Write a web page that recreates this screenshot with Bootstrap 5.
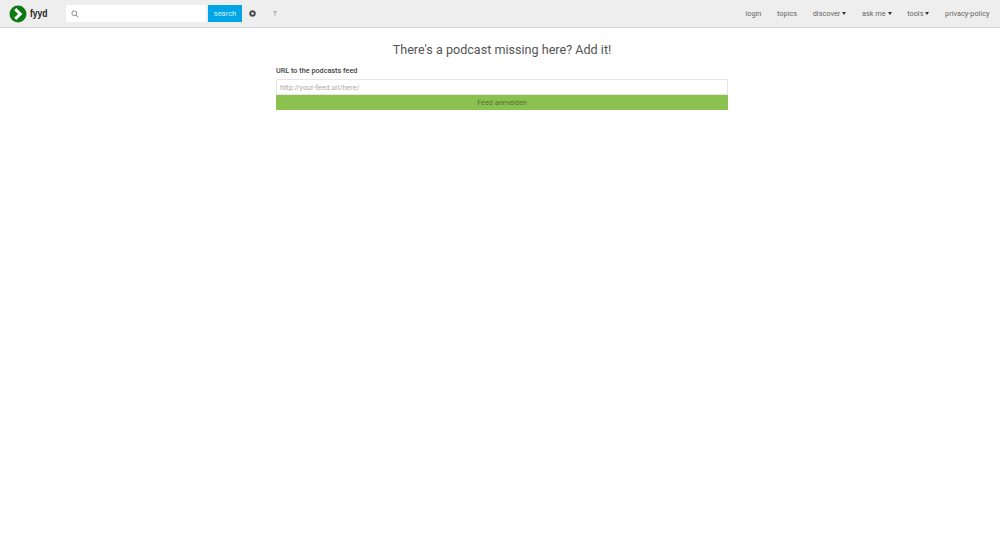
<!DOCTYPE html>
<html lang="en">
<head>
<meta charset="utf-8">
<title>fyyd</title>
<link rel="stylesheet" href="https://cdn.jsdelivr.net/npm/bootstrap@5.3.0/dist/css/bootstrap.min.css">
<style>
body { font-family: Roboto, "Liberation Sans", sans-serif; color: #444; background: #fff; }
.topbar { height: 28px; background: #eee; border-bottom: 1px solid #d5d5d5; padding: 0 10.5px 0 9px; font-size: 7.35px; }
.logo-word { font-family: "Liberation Sans", sans-serif; font-weight: 700; font-size: 11.5px; color: #222; margin-left: 3px; line-height: 1; width: 18px; transform: scaleX(.74); transform-origin: left center; }
.search-box { width: 140px; height: 17px; margin-left: 18px; background: #fff; border-radius: 2px; padding-left: 5px; }
.search-btn { width: 34px; height: 17px; background: #00a5e5; color: #d8f1fb; font-size: 7.5px; line-height: 17px; text-align: center; margin-left: 2px; }
.tool-gear { margin-left: 7px; }
.tool-help { margin-left: 17px; color: #777; }
.top-links { gap: 15.6px; color: #666; }
.caret-down { display: inline-block; width: 0; height: 0; border-left: 2.5px solid transparent; border-right: 2.5px solid transparent; border-top: 3px solid #333; margin-left: 2px; vertical-align: 1px; }
.add-panel { width: 452px; margin: 0 0 0 276px; }
.add-title { font-size: 12.6px; font-weight: 400; line-height: 20px; margin: 12px 0 0; color: #555; text-align: center; }
.feed-label { font-size: 7.25px; font-weight: 500; color: #444; line-height: 12px; margin: 5px 0 0; display: block; }
.feed-input { height: 16px; margin-top: 2px; border: 1px solid #e6e6e6; border-radius: 0; padding: 0 3px; font-size: 7.2px; background: #fff; }
.feed-input::placeholder { color: #aaa; }
.feed-btn { height: 15px; background: #8bc14f; color: #56713a; font-size: 7.3px; line-height: 15px; text-align: center; padding: 0; border: 0; border-radius: 0; display: block; width: 100%; }
</style>
</head>
<body>
<nav class="topbar d-flex align-items-center">
  <svg width="18" height="18" viewBox="0 0 18 18" aria-hidden="true"><circle cx="9" cy="9" r="8.5" fill="#0e7a12"/><path d="M6.2 4.2 11.2 9l-5 4.8" fill="none" stroke="#fff" stroke-width="3"/></svg>
  <span class="logo-word">fyyd</span>
  <div class="search-box d-flex align-items-center">
    <svg width="8" height="8" viewBox="0 0 8 8" aria-hidden="true"><circle cx="3.3" cy="3.3" r="2.4" fill="none" stroke="#888"/><path d="M5 5l2.3 2.3" stroke="#888"/></svg>
  </div>
  <div class="search-btn">search</div>
  <svg class="tool-gear" width="7" height="7" viewBox="0 0 7 7" aria-hidden="true"><circle cx="3.5" cy="3.5" r="2.2" fill="none" stroke="#444" stroke-width="1.7"/><circle cx="3.5" cy="3.5" r="3.1" fill="none" stroke="#444" stroke-width=".7" stroke-dasharray="1 .95"/></svg>
  <span class="tool-help">?</span>
  <div class="top-links d-flex ms-auto">
    <span>login</span>
    <span>topics</span>
    <span>discover<i class="caret-down"></i></span>
    <span>ask me<i class="caret-down"></i></span>
    <span>tools<i class="caret-down"></i></span>
    <span>privacy-policy</span>
  </div>
</nav>
<main class="add-panel">
  <h1 class="add-title">There's a podcast missing here? Add it!</h1>
  <form>
    <label class="feed-label" for="feedurl">URL to the podcasts feed</label>
    <input id="feedurl" class="form-control feed-input" type="text" placeholder="http://your-feed.url/here/">
    <button type="button" class="btn feed-btn">Feed anmelden</button>
  </form>
</main>
<script src="https://cdn.jsdelivr.net/npm/bootstrap@5.3.0/dist/js/bootstrap.bundle.min.js"></script>
</body>
</html>
